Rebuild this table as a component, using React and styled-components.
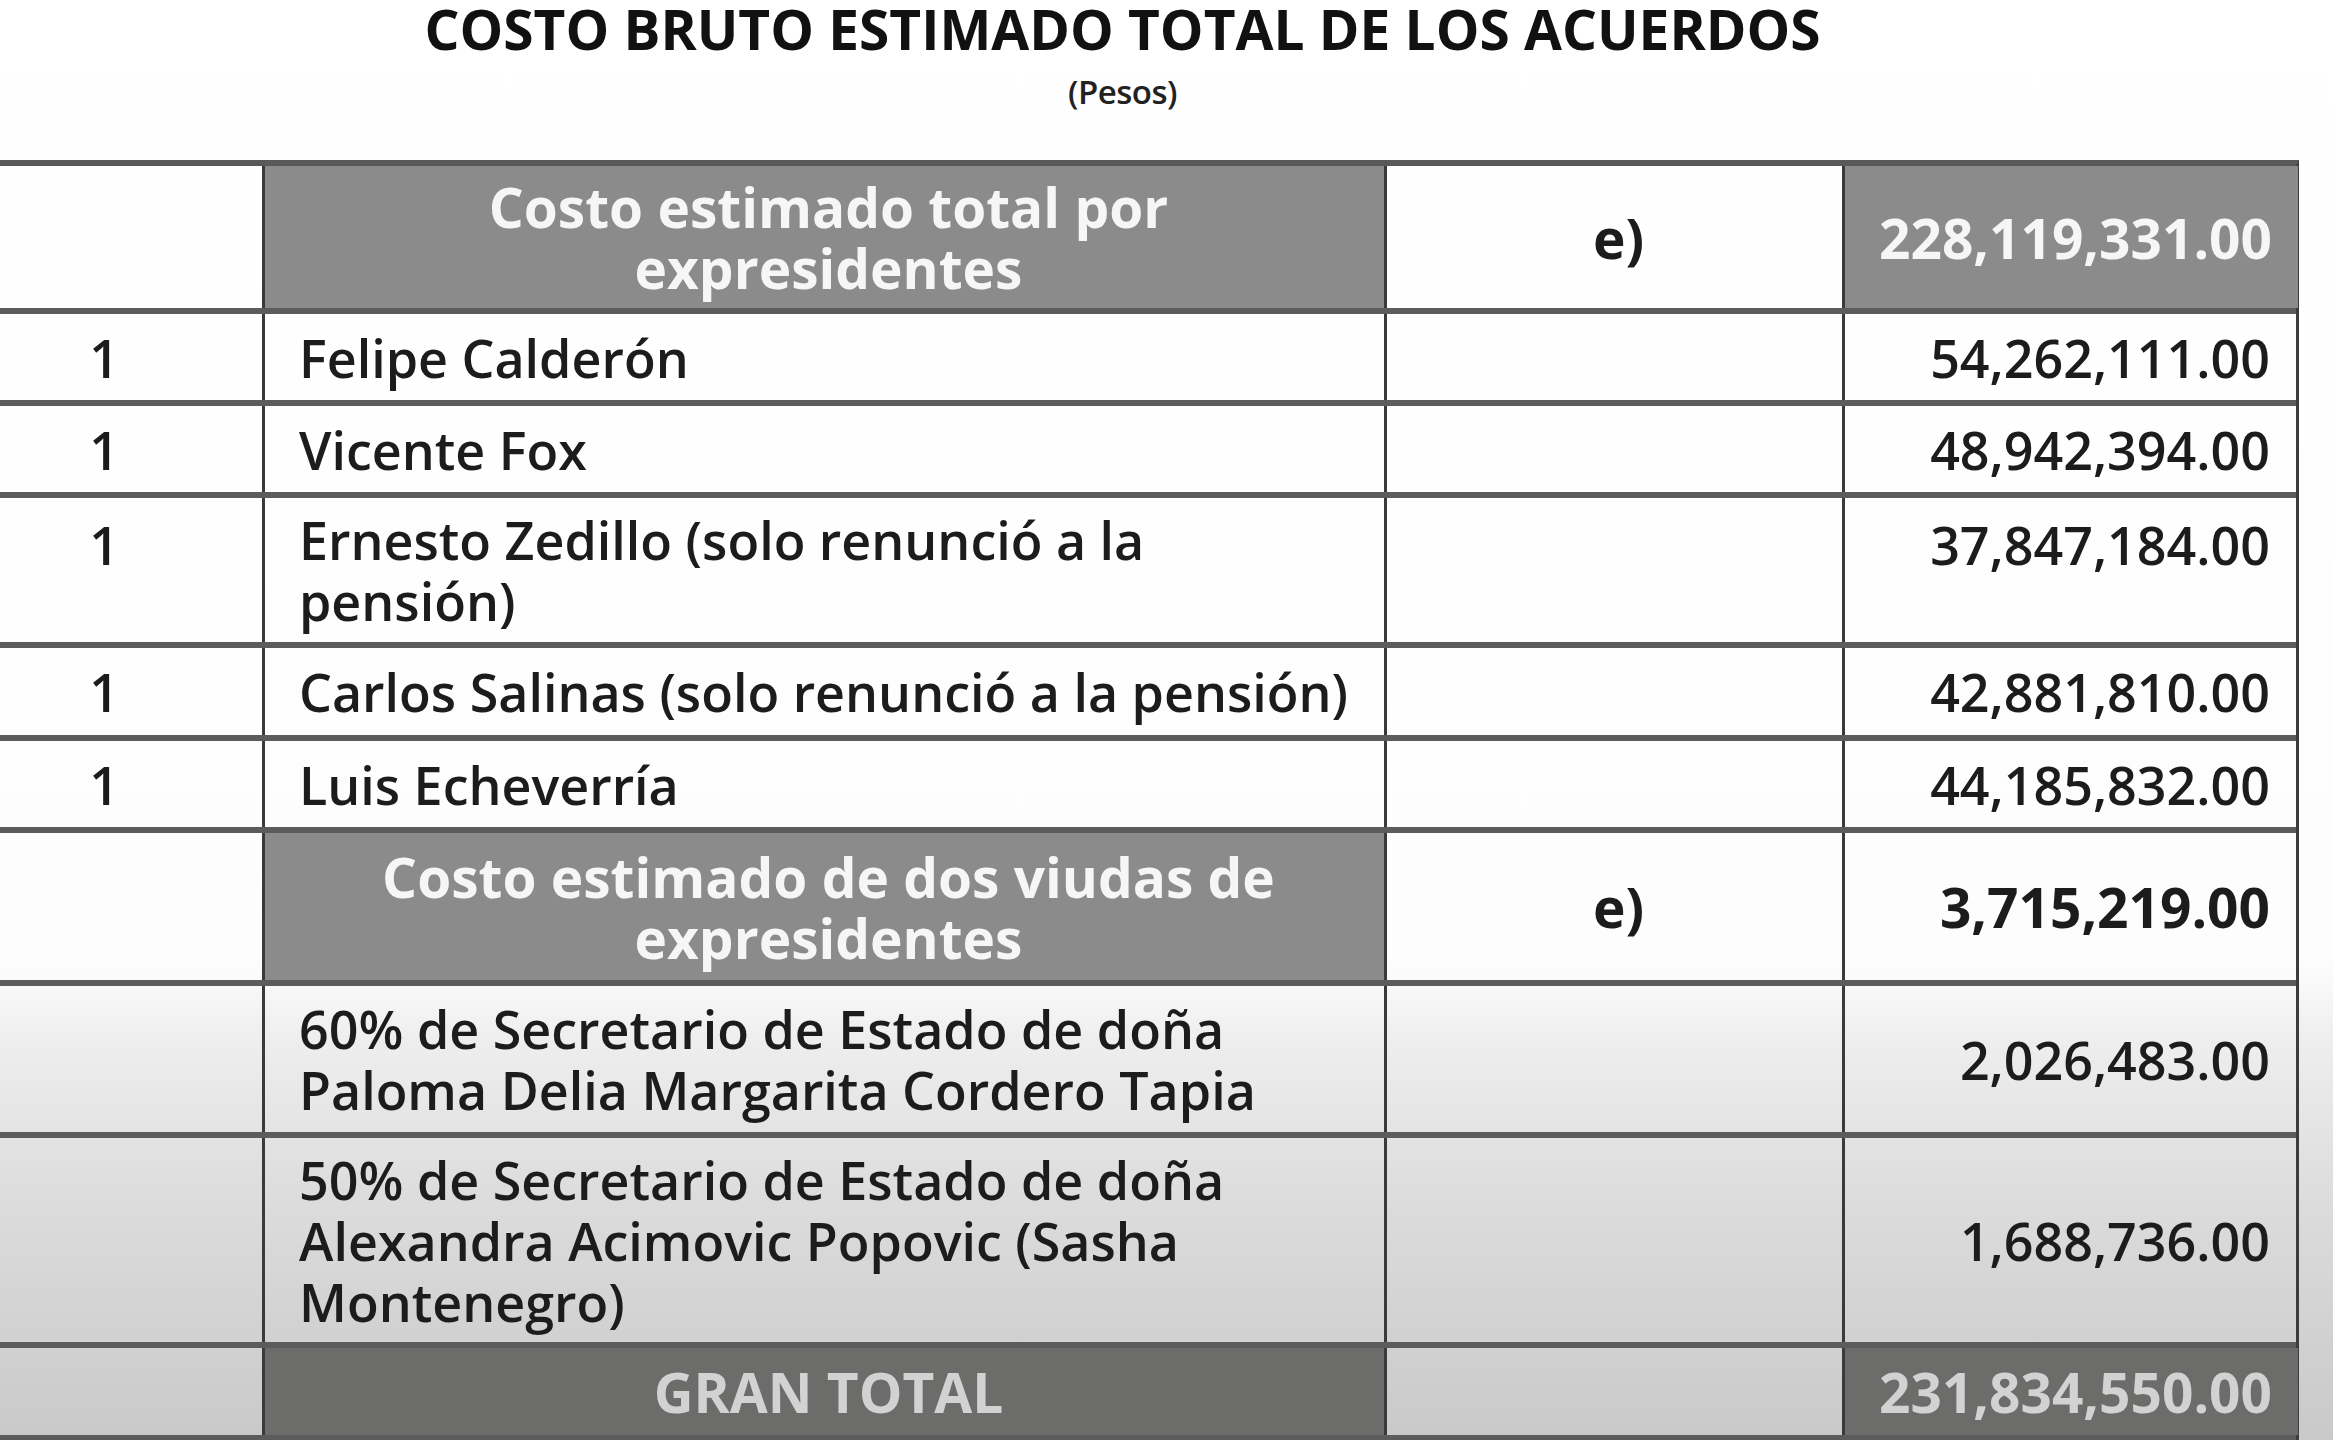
import styled, { createGlobalStyle } from "styled-components";

const GlobalStyle = createGlobalStyle`
  html, body {
    margin: 0;
    padding: 0;
  }
  body {
    width: 2333px;
    height: 1440px;
    overflow: hidden;
    font-family: "Open Sans", "Noto Sans", sans-serif;
    color: #1c1c1c;
    background: linear-gradient(
      to bottom,
      #ffffff 0px,
      #fdfdfd 960px,
      #eeeeee 1040px,
      #dcdcdc 1200px,
      #c9c9c9 1440px
    );
  }
`;

const Sheet = styled.div`
  width: 2353px;
  margin-left: -54px;
  display: flex;
  flex-direction: column;
  align-items: stretch;
`;

const Title = styled.h1`
  margin: 0;
  text-align: center;
  font-size: 55px;
  font-weight: 700;
  line-height: 58px;
  color: #111;
`;

const Subtitle = styled.div`
  text-align: center;
  font-size: 33px;
  font-weight: 600;
  line-height: 36px;
  margin-top: 16px;
  margin-bottom: 50px;
  color: #222;
  letter-spacing: -0.5px;
`;

const Table = styled.div`
  display: flex;
  flex-direction: column;
  border-top: 6px solid #595959;
  border-right: 3px solid #3c3c3c;
`;

const Row = styled.div`
  display: grid;
  grid-template-columns: 316px 1122px 458px 1fr;
  height: ${(p) => p.$h}px;
  box-sizing: border-box;
  border-bottom: 6px solid #5c5c5c;
`;

const tones = {
  plain: { bg: "transparent", fg: "#1c1c1c" },
  head: { bg: "#8a8b8a", fg: "#f6f6f6" },
  total: { bg: "#6c6d6b", fg: "#d2d2d2" },
};

const Cell = styled.div`
  display: flex;
  box-sizing: border-box;
  align-items: ${(p) => (p.$top ? "flex-start" : "center")};
  justify-content: ${(p) =>
    p.$align === "right" ? "flex-end" : p.$align === "center" ? "center" : "flex-start"};
  text-align: ${(p) => p.$align || "left"};
  padding: ${(p) => (p.$top ? "16px" : "0")} 26px 0 34px;
  border-left: ${(p) => (p.$first ? "none" : "3px solid #3a3a3a")};
  background: ${(p) => tones[p.$tone || "plain"].bg};
  color: ${(p) => tones[p.$tone || "plain"].fg};
  font-size: ${(p) => (p.$bold ? 55 : 52)}px;
  font-weight: ${(p) => (p.$bold ? 700 : 600)};
  line-height: 61px;
  white-space: nowrap;
`;

const Num = styled(Cell)`
  padding-left: 0;
  padding-right: 0;
`;

const Lines = styled.span`
  display: block;
`;

const presidents = [
  { lines: ["Felipe Calderón"], value: "54,262,111.00", h: 92 },
  { lines: ["Vicente Fox"], value: "48,942,394.00", h: 92 },
  {
    lines: ["Ernesto Zedillo (solo renunció a la", "pensión)"],
    value: "37,847,184.00",
    h: 150,
    top: true,
  },
  { lines: ["Carlos Salinas (solo renunció a la pensión)"], value: "42,881,810.00", h: 93 },
  { lines: ["Luis Echeverría"], value: "44,185,832.00", h: 92 },
];

const widows = [
  {
    lines: ["60% de Secretario de Estado de doña", "Paloma Delia Margarita Cordero Tapia"],
    value: "2,026,483.00",
    h: 152,
  },
  {
    lines: [
      "50% de Secretario de Estado de doña",
      "Alexandra Acimovic Popovic (Sasha",
      "Montenegro)",
    ],
    value: "1,688,736.00",
    h: 210,
  },
];

function Name({ lines }) {
  return (
    <Lines>
      {lines.map((l, i) => (
        <span key={i}>
          {i > 0 && <br />}
          {l}
        </span>
      ))}
    </Lines>
  );
}

export default function App() {
  return (
    <>
      <GlobalStyle />
      <Sheet>
        <Title>COSTO BRUTO ESTIMADO TOTAL DE LOS ACUERDOS</Title>
        <Subtitle>(Pesos)</Subtitle>
        <Table>
          <Row $h={148}>
            <Num $first />
            <Cell $tone="head" $align="center" $bold>
              <Name lines={["Costo estimado total por", "expresidentes"]} />
            </Cell>
            <Cell $align="center" $bold>e)</Cell>
            <Cell $tone="head" $align="right" $bold>228,119,331.00</Cell>
          </Row>
          {presidents.map((p) => (
            <Row key={p.value} $h={p.h}>
              <Num $first $align="center" $top={p.top}>1</Num>
              <Cell>
                <Name lines={p.lines} />
              </Cell>
              <Cell />
              <Cell $align="right" $top={p.top}>{p.value}</Cell>
            </Row>
          ))}
          <Row $h={153}>
            <Num $first />
            <Cell $tone="head" $align="center" $bold>
              <Name lines={["Costo estimado de dos viudas de", "expresidentes"]} />
            </Cell>
            <Cell $align="center" $bold>e)</Cell>
            <Cell $align="right" $bold>3,715,219.00</Cell>
          </Row>
          {widows.map((w) => (
            <Row key={w.value} $h={w.h}>
              <Num $first />
              <Cell>
                <Name lines={w.lines} />
              </Cell>
              <Cell />
              <Cell $align="right">{w.value}</Cell>
            </Row>
          ))}
          <Row $h={93}>
            <Num $first />
            <Cell $tone="total" $align="center" $bold>GRAN TOTAL</Cell>
            <Cell />
            <Cell $tone="total" $align="right" $bold>231,834,550.00</Cell>
          </Row>
        </Table>
      </Sheet>
    </>
  );
}
